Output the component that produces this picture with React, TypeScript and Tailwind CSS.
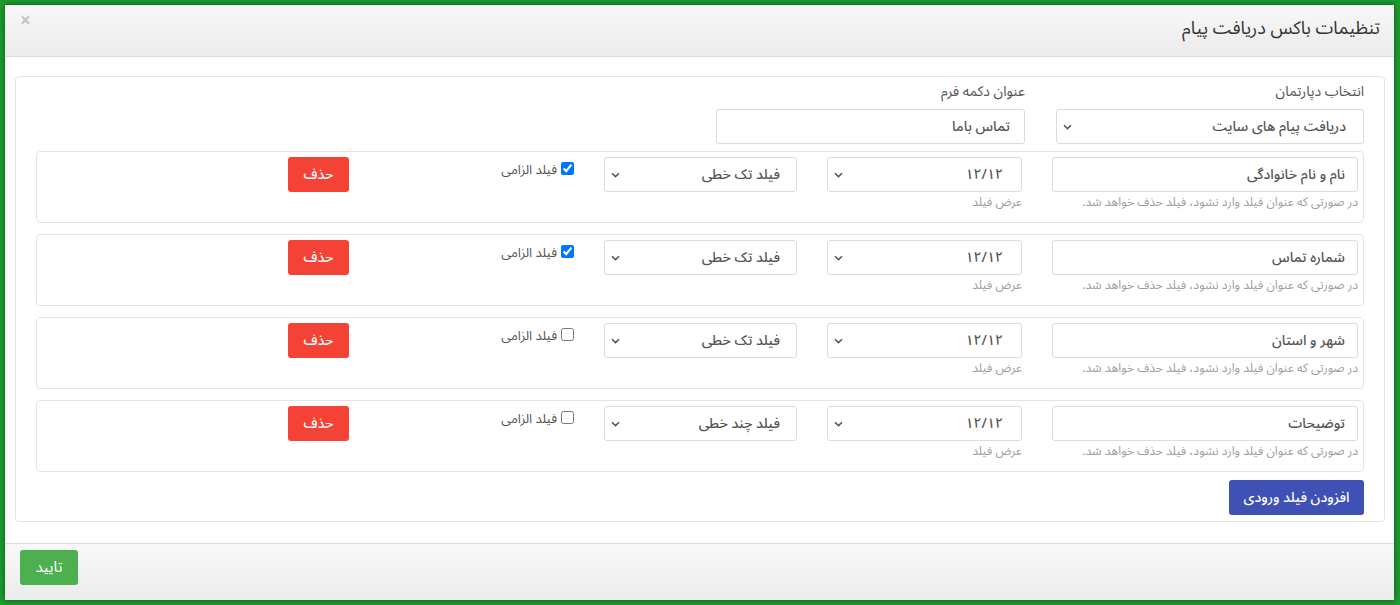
import React from "react";

const FONT = { fontFamily: '"Noto Sans Arabic", "Vazirmatn", "DejaVu Sans", sans-serif' };

function Chevron() {
  return (
    <svg
      className="pointer-events-none absolute left-[6px] top-1/2 -translate-y-1/2"
      width="9"
      height="6"
      viewBox="0 0 9 6"
      fill="none"
    >
      <path d="M1 1.2 L4.5 4.6 L8 1.2" stroke="#555" strokeWidth="1.5" />
    </svg>
  );
}

function Select({ value, width, pr = 16 }: { value: string; width: string; pr?: number }) {
  return (
    <div className={`relative h-[35px] ${width} rounded-[3px] border border-[#dcdcdc] bg-white`}>
      <div className="flex h-full items-center text-[14px] font-medium text-[#555]" style={{ paddingRight: pr }}>
        {value}
      </div>
      <Chevron />
    </div>
  );
}

type Row = { title: string; type: string; required: boolean };

const rows: Row[] = [
  { title: "نام و نام خانوادگی", type: "فیلد تک خطی", required: true },
  { title: "شماره تماس", type: "فیلد تک خطی", required: true },
  { title: "شهر و استان", type: "فیلد تک خطی", required: false },
  { title: "توضیحات", type: "فیلد چند خطی", required: false },
];

function FieldRow({ row }: { row: Row }) {
  return (
    <div className="box-border flex h-[72px] w-[1328px] gap-[30px] rounded-[4px] border border-[#e4e4e4] pr-[5px] pt-[5px]">
      <div className="flex w-[306px] flex-col">
        <div className="flex h-[35px] items-center rounded-[3px] border border-[#dcdcdc] pr-[12px] text-[14px] font-medium text-[#555]">
          {row.title}
        </div>
        <div className="mt-[2px] text-[12.2px] leading-[17px] text-[#9e9e9e]">
          در صورتی که عنوان فیلد وارد نشود، فیلد حذف خواهد شد.
        </div>
      </div>
      <div className="flex w-[195px] flex-col">
        <Select value="۱۲/۱۲" width="w-[195px]" pr={18} />
        <div className="mt-[2px] text-[12.2px] leading-[17px] text-[#9e9e9e]">عرض فیلد</div>
      </div>
      <div className="w-[193px]">
        <Select value={row.type} width="w-[193px]" pr={16} />
      </div>
      <div className="flex w-[195px] items-start pt-[2px]">
        <label className="flex items-center gap-[4px] text-[13px] leading-[16px] text-[#555]">
          <input type="checkbox" defaultChecked={row.required} className="m-0 h-[13px] w-[13px]" />
          <span className="pt-[3px]">فیلد الزامی</span>
        </label>
      </div>
      <div>
        <button className="h-[35px] w-[61px] rounded-[3px] bg-[#f44336] text-[14px] font-medium text-white">
          حذف
        </button>
      </div>
    </div>
  );
}

export default function App() {
  return (
    <div className="h-[605px] w-[1400px] bg-[#1b9b30] pb-[5px] pl-[5px] pr-[6px] pt-[5px]" style={FONT}>
      <div dir="rtl" className="flex h-full flex-col bg-white shadow-[0_0_6px_rgba(0,0,0,0.45)]">
        {/* header */}
        <div className="flex h-[52px] justify-between border-b border-[#dcdcdc] bg-gradient-to-b from-[#f8f8f8] to-[#ebebeb] pl-[15px] pr-[14px]">
          <div className="pt-[11px] text-[18px] leading-[24px] text-[#333]">تنظیمات باکس دریافت پیام</div>
          <div className="pt-[5px] text-[19px] font-bold leading-[22px] text-[#c4c4c4]">×</div>
        </div>

        {/* body */}
        <div className="flex-1 pb-[20px] pl-[10px] pr-[9px] pt-[19px]">
          <div className="flex h-[446px] flex-col items-start rounded-[4px] border border-[#e4e4e4] px-[20px] pb-[5px] pt-[6px]">
            <div className="flex gap-[31px]">
              <div className="flex w-[308px] flex-col">
                <div className="text-[14px] leading-[18px] text-[#555]">انتخاب دپارتمان</div>
                <div className="mt-[8px]">
                  <Select value="دریافت پیام های سایت" width="w-[308px]" pr={17} />
                </div>
              </div>
              <div className="flex w-[309px] flex-col">
                <div className="text-[14px] leading-[18px] text-[#555]">عنوان دکمه فرم</div>
                <div className="mt-[8px] flex h-[35px] items-center rounded-[3px] border border-[#dcdcdc] pr-[14px] text-[14px] font-medium text-[#555]">
                  تماس باما
                </div>
              </div>
            </div>

            <div className="mt-[7px] flex flex-col gap-[11px]">
              {rows.map((r) => (
                <FieldRow key={r.title} row={r} />
              ))}
            </div>

            <button className="mt-[8px] h-[35px] w-[135px] rounded-[3px] bg-[#3f51b5] text-[14px] font-medium text-white">
              افزودن فیلد ورودی
            </button>
          </div>
        </div>

        {/* footer */}
        <div className="flex h-[57px] items-start border-t border-[#dcdcdc] bg-gradient-to-b from-[#f9f9f9] to-[#ebebeb] pl-[15px] pt-[6px]" dir="ltr">
          <button dir="rtl" className="h-[35px] w-[58px] rounded-[3px] bg-[#4caf50] text-[15px] text-white">
            تایید
          </button>
        </div>
      </div>
    </div>
  );
}
